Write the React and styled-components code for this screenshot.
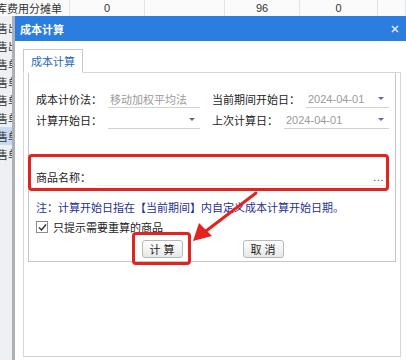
import React from "react";
import styled, { createGlobalStyle } from "styled-components";

const Global = createGlobalStyle`
  html, body { margin: 0; padding: 0; background: #fff; }
  * { box-sizing: border-box; }
`;

const Page = styled.div`
  position: relative;
  width: 406px;
  height: 360px;
  overflow: hidden;
  display: flex;
  flex-direction: column;
  background: #fff;
  font-family: "Noto Sans CJK SC", "Noto Sans", sans-serif;
  font-size: 11px;
  color: #222;
`;

/* spreadsheet behind the dialog */
const SheetRow = styled.div`
  height: 16px;
  flex: none;
  display: grid;
  grid-template-columns: 70px 75px 80px 75px 78px 28px;
  background: #fbfbfb;
`;

const SheetCell = styled.div`
  overflow: hidden;
  white-space: nowrap;
  line-height: 16px;
  font-size: 11px;
  color: #333;
  text-align: ${({ $left }) => ($left ? "left" : "center")};
  border-right: 1px solid #e2e4e8;
  font-family: ${({ $num }) =>
    $num ? '"Liberation Sans", sans-serif' : '"Noto Sans CJK SC", sans-serif'};
  span { margin-left: -4px; }
`;

const Lower = styled.div`
  flex: 1;
  display: flex;
  min-height: 0;
`;

const LeftStrip = styled.div`
  width: 15px;
  flex: none;
  padding-top: 3px;
  background: #eef0f3;
  border-right: 3px solid #adb0b5;
  overflow: hidden;
`;

const StripRow = styled.div`
  height: 18px;
  line-height: 18px;
  white-space: nowrap;
  font-size: 11px;
  color: #333;
  background: ${({ $active }) => ($active ? "#c7daf2" : "transparent")};
  span { display: inline-block; margin-left: -14px; }
`;

/* dialog */
const Dialog = styled.div`
  flex: 1;
  display: flex;
  flex-direction: column;
  background: #fff;
`;

const TitleBar = styled.div`
  height: 25px;
  flex: none;
  display: flex;
  align-items: center;
  justify-content: space-between;
  padding: 0 7px 0 5px;
  background: #2c7de0;
  color: #fff;
  font-weight: bold;
  font-size: 11px;
`;

const Body = styled.div`
  flex: 1;
  padding: 8px 5px 0 8px;
  display: flex;
  flex-direction: column;
`;

const Tab = styled.div`
  width: 60px;
  height: 24px;
  margin-bottom: -1px;
  position: relative;
  z-index: 1;
  display: flex;
  align-items: center;
  justify-content: center;
  background: #fff;
  border: 1px solid #c9c9c9;
  border-bottom: 1px solid #fff;
  color: #2a66b8;
  font-size: 11px;
`;

const TabPanel = styled.div`
  height: 285px;
  border: 1px solid #d6d6d6;
  padding: 0 4px;
`;

const GroupBox = styled.div`
  border: 1px solid #c6c6c6;
  border-top: none;
  padding: 17px 6px 3px 7px;
  display: flex;
  flex-direction: column;
`;

const FieldGrid = styled.div`
  display: grid;
  grid-template-columns: 164px 177px;
  column-gap: 12px;
  row-gap: 3px;
`;

const FieldRow = styled.div`
  height: 18px;
  display: flex;
  align-items: center;
`;

const Label = styled.span`
  white-space: nowrap;
  margin-right: 6px;
  color: #222;
`;

const Field = styled.div`
  flex: 1;
  height: 18px;
  display: flex;
  align-items: center;
  justify-content: space-between;
  padding: 0 5px 0 2px;
  border-bottom: 1px solid ${({ $faint }) => ($faint ? "#ececec" : "#d2d2d2")};
  color: #9a9a9a;
  font-family: ${({ $date }) =>
    $date ? '"Liberation Sans", sans-serif' : '"Noto Sans CJK SC", sans-serif'};
  font-size: 11px;
`;

const Caret = styled.span`
  width: 0;
  height: 0;
  border-left: 3px solid transparent;
  border-right: 3px solid transparent;
  border-top: 3px solid #5c6f8c;
`;

const Dots = styled.span`
  color: #444;
  font-family: "Liberation Sans", sans-serif;
  letter-spacing: 0.5px;
`;

/* red annotation frame drawn over a part */
const Marked = styled.div`
  position: relative;
  &::after {
    content: "";
    position: absolute;
    top: ${({ $t }) => $t}px;
    right: ${({ $r }) => $r}px;
    bottom: ${({ $b }) => $b}px;
    left: ${({ $l }) => $l}px;
    border: 3px solid #e3231e;
    border-radius: 4px;
    pointer-events: none;
  }
`;

const ProductMark = styled(Marked)`
  margin-top: 38px;
`;

const ProductRow = styled(FieldRow)`
  height: 20px;
`;

const Note = styled.div`
  margin-top: 12px;
  line-height: 16px;
  color: #1f2f8f;
  white-space: nowrap;
`;

const CheckRow = styled.label`
  margin-top: 4px;
  height: 16px;
  display: flex;
  align-items: center;
  gap: 5px;
  color: #222;
`;

const Box = styled.span`
  width: 12px;
  height: 12px;
  border: 1px solid #8c8c8c;
  background: #fff;
  display: flex;
  align-items: center;
  justify-content: center;
`;

const Buttons = styled.div`
  margin-top: 5px;
  display: flex;
  justify-content: center;
  gap: 60px;
`;

const Button = styled.button`
  width: 41px;
  height: 18px;
  padding: 0;
  border: 1px solid #b8b8b8;
  border-radius: 3px;
  background: linear-gradient(#fefefe, #e8e8e8);
  font-family: "Noto Sans CJK SC", sans-serif;
  font-size: 11px;
  color: #222;
  letter-spacing: 3px;
  text-indent: 3px;
  line-height: 16px;
`;

const Arrow = styled.svg`
  position: absolute;
  left: 0;
  top: 0;
  pointer-events: none;
`;

const stripRows = [
  "销售出库单",
  "销售出库单",
  "销售单",
  "销售单",
  "销售单",
  "销售单",
  "销售单",
  "销售单",
];

export default function App() {
  return (
    <Page>
      <Global />
      <SheetRow>
        <SheetCell $left>
          <span>库费用分摊单</span>
        </SheetCell>
        <SheetCell $num>0</SheetCell>
        <SheetCell />
        <SheetCell $num>96</SheetCell>
        <SheetCell $num>0</SheetCell>
        <SheetCell />
      </SheetRow>

      <Lower>
        <LeftStrip>
          {stripRows.map((t, i) => (
            <StripRow key={i} $active={i === 6}>
              <span>{t}</span>
            </StripRow>
          ))}
        </LeftStrip>

        <Dialog>
          <TitleBar>
            <span>成本计算</span>
            <svg width="8" height="8" viewBox="0 0 8 8">
              <path d="M1 1L7 7M7 1L1 7" stroke="#dce8f8" strokeWidth="1.6" />
            </svg>
          </TitleBar>

          <Body>
            <Tab>成本计算</Tab>
            <TabPanel>
              <GroupBox>
                <FieldGrid>
                  <FieldRow>
                    <Label>成本计价法：</Label>
                    <Field>移动加权平均法</Field>
                  </FieldRow>
                  <FieldRow>
                    <Label>当前期间开始日：</Label>
                    <Field $date>
                      2024-04-01
                      <Caret />
                    </Field>
                  </FieldRow>
                  <FieldRow>
                    <Label>计算开始日：</Label>
                    <Field>
                      <span />
                      <Caret />
                    </Field>
                  </FieldRow>
                  <FieldRow>
                    <Label>上次计算日：</Label>
                    <Field $date>
                      2024-04-01
                      <Caret />
                    </Field>
                  </FieldRow>
                </FieldGrid>

                <ProductMark $t={-13} $r={0} $b={-4} $l={-8}>
                  <ProductRow>
                    <Label>商品名称：</Label>
                    <Field $faint>
                      <span />
                      <Dots>...</Dots>
                    </Field>
                  </ProductRow>
                </ProductMark>

                <Note>注：计算开始日指在【当前期间】内自定义成本计算开始日期。</Note>

                <CheckRow>
                  <Box>
                    <svg width="9" height="9" viewBox="0 0 9 9">
                      <path d="M1 4.5L3.5 7L8 1.5" fill="none" stroke="#333" strokeWidth="1.5" />
                    </svg>
                  </Box>
                  只提示需要重算的商品
                </CheckRow>

                <Buttons>
                  <Marked $t={-8} $r={-8} $b={-7} $l={-10}>
                    <Button>计算</Button>
                  </Marked>
                  <Button>取消</Button>
                </Buttons>
              </GroupBox>
            </TabPanel>
          </Body>
        </Dialog>
      </Lower>

      <Arrow width="406" height="360" viewBox="0 0 406 360">
        <line x1="256" y1="193" x2="206" y2="231" stroke="#e3231e" strokeWidth="3" strokeLinecap="round" />
        <polygon points="193,241 199,223 212,236" fill="#e3231e" />
      </Arrow>
    </Page>
  );
}
